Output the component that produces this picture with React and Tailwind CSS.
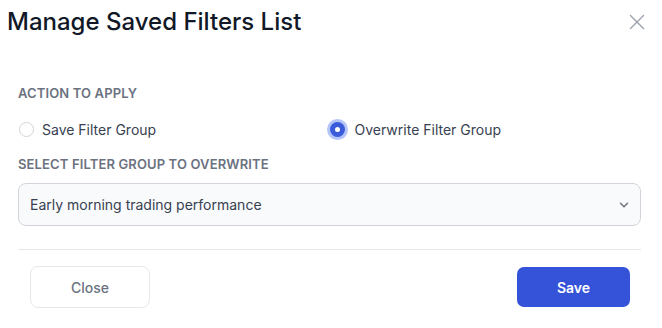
import React, { useState } from "react";
import { X, ChevronDown } from "lucide-react";

// saved filters modal
const App = () => {
  const [action, setAction] = useState("overwrite");

  const labelStyle =
    "text-[13px] font-semibold uppercase tracking-[0.01em] text-[#6b7280]";

  return (
    <div className="h-[328px] w-[662px] bg-white font-['Inter',sans-serif]">
      <div className="flex items-start justify-between pl-[7px] pr-[12px] pt-[6px]">
        <h2 className="text-[24px] font-medium leading-[32px] text-[#111827]">
          Manage Saved Filters List
        </h2>
        <button className="mt-[3px] text-[#9ca3af]">
          <X className="size-[26px]" strokeWidth={1.3} />
        </button>
      </div>

      <div className="pl-[18px] pr-[21px] pt-[46px]">
        <p className={labelStyle}>Action to apply</p>

        <div className="mt-[15px] grid grid-cols-2">
          <label
            className="flex cursor-pointer items-center gap-[8px] text-[14px] text-[#374151]"
            onClick={() => setAction("save")}
          >
            {action === "save" ? (
              <span className="flex size-[15px] items-center justify-center rounded-full bg-[#3b5bdb] ring-[3px] ring-[#b4c5f7]">
                <span className="size-[5px] rounded-full bg-white" />
              </span>
            ) : (
              <span className="ml-[1px] size-[15px] rounded-full border border-[#d1d5db] bg-white" />
            )}
            Save Filter Group
          </label>
          <label
            className="-ml-[3px] flex cursor-pointer items-center gap-[6px] text-[14px] text-[#374151]"
            onClick={() => setAction("overwrite")}
          >
            <span className="flex size-[22px] items-center justify-center">
              {action === "overwrite" ? (
                <span className="flex size-[15px] items-center justify-center rounded-full bg-[#3b5bdb] ring-[3px] ring-[#b4c5f7]">
                  <span className="size-[5px] rounded-full bg-white" />
                </span>
              ) : (
                <span className="size-[15px] rounded-full border border-[#d1d5db] bg-white" />
              )}
            </span>
            Overwrite Filter Group
          </label>
        </div>

        <p className={`${labelStyle} mt-[14px]`}>Select filter group to overwrite</p>

        <div className="mt-[9px] flex h-[43px] items-center justify-between rounded-[8px] border border-[#d1d5db] bg-[#f9fafb] pl-[11px] pr-[9px] text-[14px] text-[#374151]">
          <span>Early morning trading performance</span>
          <ChevronDown className="size-[14px] text-[#6b7280]" strokeWidth={2.5} />
        </div>

        <div className="mt-[23px] border-t border-[#e5e7eb]" />

        <div className="flex items-center justify-between pl-[12px] pr-[11px] pt-[16px]">
          <button className="h-[42px] w-[120px] rounded-[8px] border border-[#e5e7eb] bg-white text-[14px] font-medium text-[#6b7280]">
            Close
          </button>
          <button className="h-[40px] w-[113px] rounded-[7px] bg-[#3553d9] text-[14px] font-semibold text-white">
            Save
          </button>
        </div>
      </div>
    </div>
  );
};

export default App;
